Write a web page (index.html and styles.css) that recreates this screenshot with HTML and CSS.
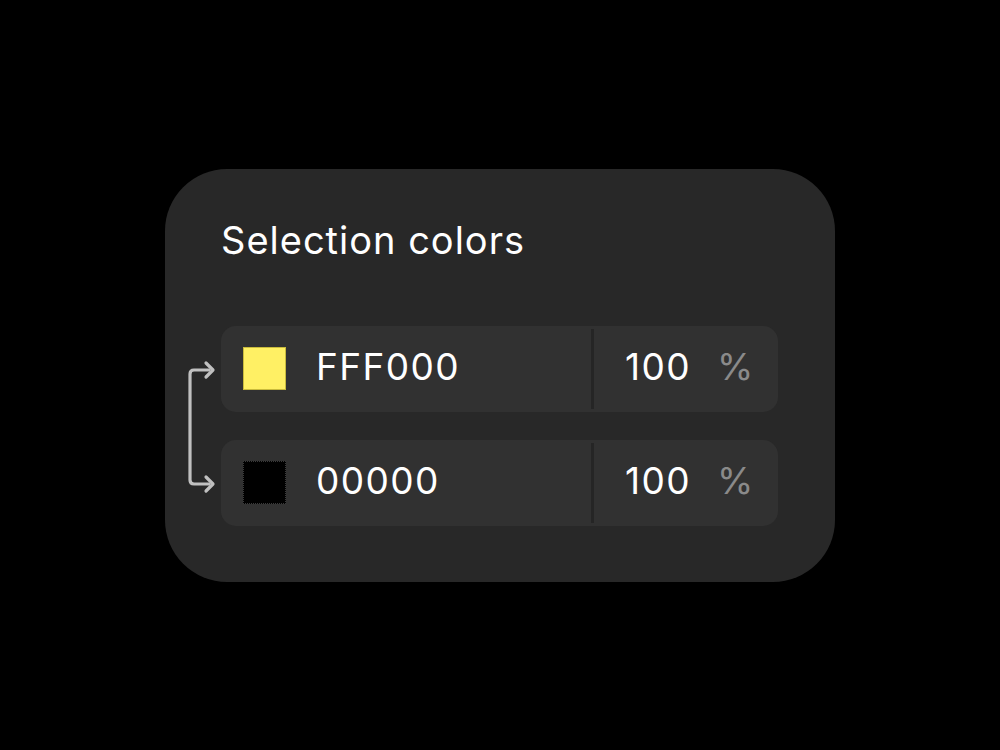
FILE: index.html
```html
<!DOCTYPE html>
<html lang="en">
<head>
  <meta charset="UTF-8" />
  <meta name="viewport" content="width=device-width, initial-scale=1.0"/>
  <title>Selection colors</title>
  <link rel="stylesheet" href="styles.css">
</head>
<body>
  <div class="panel">
    <h2 class="title">Selection colors</h2>

    <div class="colors">
      <!-- link between the two rows -->
      <svg class="link" width="32" height="130" viewBox="0 0 32 130">
        <path d="M24 11 H9 Q5 11 5 15 V121 Q5 125 9 125 H24" fill="none" stroke="#c0c0c0" stroke-width="3.2" stroke-linecap="round"/>
        <path d="M21 4 L28 11 L21 18" fill="none" stroke="#c0c0c0" stroke-width="3.2" stroke-linecap="round" stroke-linejoin="round"/>
        <path d="M21 118 L28 125 L21 132" fill="none" stroke="#c0c0c0" stroke-width="3.2" stroke-linecap="round" stroke-linejoin="round"/>
      </svg>

      <div class="color-row">
        <div class="hex">
          <span class="swatch yellow"></span>
          <span class="hex-value">FFF000</span>
        </div>
        <div class="opacity">
          <span class="opacity-value">100</span>
          <span class="unit">%</span>
        </div>
      </div>

      <div class="color-row">
        <div class="hex">
          <span class="swatch black"></span>
          <span class="hex-value">00000</span>
        </div>
        <div class="opacity">
          <span class="opacity-value">100</span>
          <span class="unit">%</span>
        </div>
      </div>
    </div>
  </div>
</body>
</html>
```

FILE: styles.css
```css
:root {
  --bg: #000000;
  --panel-bg: #282828;
  --row-bg: #313131;
  --divider: #252525;
  --text: #ffffff;
  --muted: #8a8a8a;
}

body {
  margin: 0;
  font-family: 'Inter', 'Noto Sans', sans-serif;
  background-color: var(--bg);
  color: var(--text);
  display: flex;
  justify-content: center;
  align-items: center;
  height: 100vh;
}

.panel {
  width: 670px;
  height: 413px;
  box-sizing: border-box;
  background-color: var(--panel-bg);
  border-radius: 62px;
  padding: 47px 57px 0 56px;
}

.title {
  margin: 0;
  font-size: 38px;
  font-weight: 400;
  line-height: 48px;
  letter-spacing: 1px;
}

.colors {
  position: relative;
  margin-top: 62px;
  display: flex;
  flex-direction: column;
  gap: 28px;
}

.link {
  position: absolute;
  left: -36px;
  top: 33px;
  overflow: visible;
}

.color-row {
  display: flex;
  height: 86px;
  background-color: var(--row-bg);
  border-radius: 15px;
  align-items: center;
}

.hex {
  flex: 1;
  display: flex;
  align-items: center;
  padding-left: 22px;
  height: 100%;
}

.swatch {
  width: 43px;
  height: 43px;
  box-sizing: border-box;
}

.swatch.yellow {
  background-color: #fff064;
  border: 1px solid #c9bb3c;
}

.swatch.black {
  background-color: #000000;
  border: 1px dotted #3a3a3a;
}

.hex-value,
.opacity-value,
.unit {
  font-size: 37px;
  line-height: 44px;
  letter-spacing: 1.4px;
  margin-top: -4px;
}

.hex-value {
  margin-left: 30px;
}

.opacity {
  width: 187px;
  height: 80px;
  border-left: 3px solid var(--divider);
  display: flex;
  align-items: center;
  padding-left: 31px;
  box-sizing: border-box;
}

.unit {
  margin-left: 26px;
  letter-spacing: 0;
  color: var(--muted);
}
```
